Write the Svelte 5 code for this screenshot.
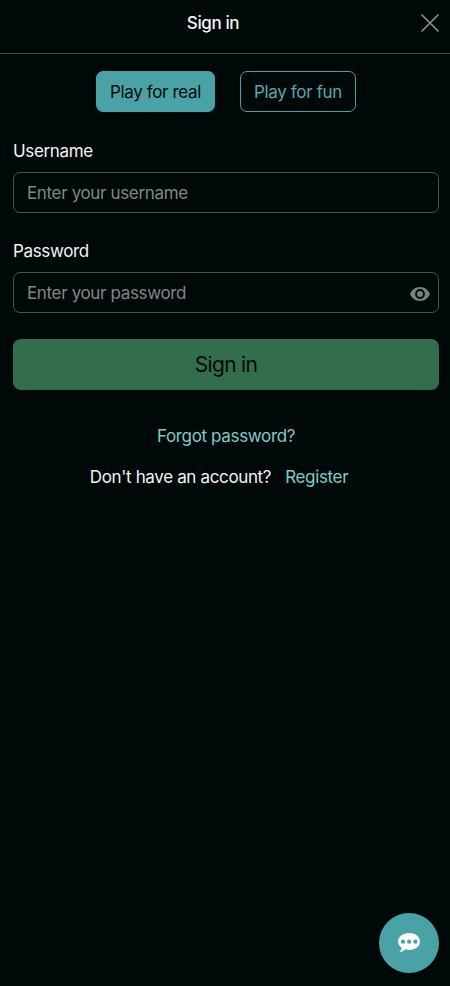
<script lang="ts">
	let mode = $state('real');
	let username = $state('');
	let password = $state('');
	let showPassword = $state(false);
</script>

<div class="page">
	<header>
		<h1>Sign in</h1>
		<button class="close" aria-label="Close">
			<svg width="18" height="18" viewBox="0 0 18 18">
				<path d="M1 1l16 16M17 1L1 17" stroke="#8b8f8e" stroke-width="1.7" stroke-linecap="round" />
			</svg>
		</button>
	</header>

	<div class="modes">
		<button class="mode real" class:active={mode === 'real'} onclick={() => (mode = 'real')}>
			Play for real
		</button>
		<button class="mode fun" class:active={mode === 'fun'} onclick={() => (mode = 'fun')}>
			Play for fun
		</button>
	</div>

	<form onsubmit={(e) => e.preventDefault()}>
		<label for="username">Username</label>
		<div class="field">
			<input id="username" type="text" placeholder="Enter your username" bind:value={username} />
		</div>

		<label for="password">Password</label>
		<div class="field">
			<input
				id="password"
				type={showPassword ? 'text' : 'password'}
				placeholder="Enter your password"
				bind:value={password}
			/>
			<button
				type="button"
				class="eye"
				aria-label="Show password"
				onclick={() => (showPassword = !showPassword)}
			>
				<svg width="20" height="14" viewBox="0 0 20 14">
					<path
						fill="#7b8080"
						fill-rule="evenodd"
						d="M10 0C5.5 0 1.7 2.8 0 7c1.7 4.2 5.5 7 10 7s8.300-2.800 10-7C18.300 2.800 14.500 0 10 0zm0 11.900a4.900 4.900 0 1 1 0-9.800 4.900 4.900 0 0 1 0 9.800zM10 4a3 3 0 1 0 0 6 3 3 0 0 0 0-6z"
					/>
				</svg>
			</button>
		</div>

		<button class="submit" type="submit">Sign in</button>
	</form>

	<a class="forgot" href="#forgot">Forgot password?</a>
	<p class="register">
		<span>Don't have an account?</span>
		<a href="#register">Register</a>
	</p>

	<button class="chat" aria-label="Chat">
		<svg width="24" height="20" viewBox="0 0 24 20">
			<path
				fill="#fff"
				d="M12.500 0C18.600 0 23 3.600 23 8.500S18.600 17 12.500 17c-1.600 0-3-.2-4.300-.7C6.700 18 4.700 19.200 2.400 19.200c1.300-1 2-2.600 2.100-4.600C2.300 13 1 10.900 1 8.500 1 3.600 6 0 12.500 0z"
			/>
			<g fill="#49a2a5">
				<circle cx="6" cy="8.700" r="2.100" />
				<circle cx="12.200" cy="8.700" r="2.100" />
				<circle cx="18.400" cy="8.700" r="2.100" />
			</g>
		</svg>
	</button>
</div>

<style>
	:global(body) {
		background: #010808;
	}

	.page {
		box-sizing: border-box;
		min-height: 986px;
		display: flex;
		flex-direction: column;
		font-family: Inter, 'Liberation Sans', sans-serif;
		font-size: 17px;
		line-height: 22px;
		letter-spacing: -0.35px;
		color: #f2f4f4;
	}

	button,
	input {
		font: inherit;
		letter-spacing: inherit;
		border: none;
		background: none;
		padding: 0;
		margin: 0;
	}

	a {
		color: #7fcbc8;
		text-decoration: none;
	}

	header {
		box-sizing: border-box;
		height: 54px;
		display: grid;
		grid-template-columns: 1fr auto 1fr;
		align-items: center;
		padding: 0 11px 8px 0;
		border-bottom: 1px solid #414746;
	}

	h1 {
		grid-column: 2;
		margin: 0 13px 0 0;
		font-size: 17px;
		font-weight: 550;
		letter-spacing: -0.4px;
	}

	.close {
		justify-self: end;
		height: 18px;
	}

	svg {
		display: block;
		fill: none;
	}

	.modes {
		display: flex;
		justify-content: center;
		gap: 25px;
		padding: 17px 0 0 2px;
	}

	.mode {
		box-sizing: border-box;
		height: 41px;
		border: 1px solid #49a2a5;
		border-radius: 7px;
		color: #57a9aa;
	}

	.real {
		width: 119px;
	}

	.fun {
		width: 116px;
	}

	.mode.active {
		background: #49a2a5;
		color: #010808;
	}

	form {
		display: flex;
		flex-direction: column;
		padding: 28px 11px 0 13px;
	}

	label {
		margin-bottom: 10px;
	}

	.field {
		box-sizing: border-box;
		height: 41px;
		display: flex;
		align-items: center;
		padding: 0 8px 0 13px;
		margin-bottom: 27px;
		border: 1px solid #4b5050;
		border-radius: 7px;
	}

	input {
		flex: 1;
		min-width: 0;
		color: inherit;
		outline: none;
	}

	input::placeholder {
		color: #828686;
		opacity: 1;
	}

	.eye {
		margin-top: 2px;
	}

	.submit {
		height: 51px;
		margin-top: -1px;
		border-radius: 8px;
		background: #326e4d;
		color: #010808;
		font-size: 21px;
		letter-spacing: -0.7px;
	}

	.forgot {
		align-self: center;
		margin: 35px 0 0 2px;
	}

	.register {
		display: flex;
		justify-content: center;
		gap: 14px;
		margin: 19px 12px 0 0;
	}

	.chat {
		position: fixed;
		right: 11px;
		bottom: 13px;
		width: 60px;
		height: 60px;
		display: flex;
		align-items: center;
		justify-content: center;
		border-radius: 50%;
		background: #49a2a5;
	}
</style>
